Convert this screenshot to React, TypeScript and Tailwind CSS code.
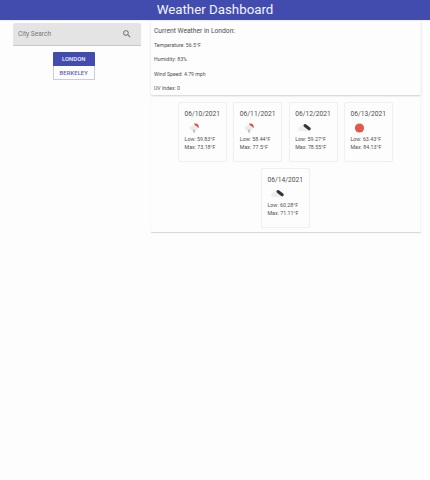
type Kind = 'rain' | 'cloud' | 'sun';

const days: { date: string; low: string; max: string; kind: Kind }[] = [
  { date: '06/10/2021', low: '59.83', max: '73.18', kind: 'rain' },
  { date: '06/11/2021', low: '58.44', max: '77.5', kind: 'rain' },
  { date: '06/12/2021', low: '59.27', max: '78.55', kind: 'cloud' },
  { date: '06/13/2021', low: '63.43', max: '84.13', kind: 'sun' },
  { date: '06/14/2021', low: '60.28', max: '71.11', kind: 'cloud' },
];

function WeatherIcon({ kind }: { kind: Kind }) {
  return (
    <svg viewBox="0 0 18 18" className="block h-[18px] w-[18px]">
      {kind === 'sun' && <circle cx="9.5" cy="9" r="4.6" fill="#e2594b" />}
      {kind === 'rain' && (
        <>
          <path d="M9 4.6Q13.8 3.8 13.9 8.8L11 8.4Z" fill="#dc4b43" />
          <path d="M6.5 11.2a2 2 0 0 1 .2-4 2.6 2.6 0 0 1 4.3-.2 2.2 2.2 0 0 1 .5 4.2Z" fill="#ececef" />
          <path d="M7.8 11l2.4.6M8 12.6l2.1.6" stroke="#b6b6bb" strokeWidth="1.1" />
        </>
      )}
      {kind === 'cloud' && (
        <>
          <path d="M5 12a2 2 0 0 1 0-4A3 3 0 0 1 9.5 6.7l4 5.3Z" fill="#eeeeef" />
          <path d="M10 6.5L14.2 9.8" stroke="#343438" strokeWidth="3" strokeLinecap="round" />
        </>
      )}
    </svg>
  );
}

export default function App() {
  return (
    <div className="flex h-[480px] w-[430px] flex-col overflow-hidden bg-[#fdfdfd] font-[Roboto,sans-serif] text-[#505050]">
      <header className="z-10 flex h-[19.5px] shrink-0 items-center justify-center bg-[#414cae] shadow-[0_0_1px_#aaaaae]">
        <h1 className="text-[13.3px] leading-[19px] text-[#f4f5ff]">Weather Dashboard</h1>
      </header>
      <div className="flex">
        <aside className="flex w-[151px] shrink-0 flex-col pt-[3.5px] pl-[13px]">
          <div className="flex h-[22.5px] w-[128px] items-center justify-between rounded-t-[2px] border-b border-[#c8c8c8] bg-[#e4e4e4] pr-[9.5px] pl-[5px]">
            <span className="text-[6.6px] leading-[10px] text-[#777]">City Search</span>
            <svg viewBox="0 0 24 24" className="h-[10px] w-[10px]" fill="#666">
              <path d="M15.5 14h-.79l-.28-.27A6.47 6.47 0 0 0 16 9.5 6.5 6.5 0 1 0 9.5 16c1.61 0 3.09-.59 4.23-1.57l.27.28v.79l5 4.99L20.49 19l-4.99-5zm-6 0C7.01 14 5 11.99 5 9.5S7.01 5 9.5 5 14 7.01 14 9.5 11.99 14 9.5 14z" />
            </svg>
          </div>
          <div className="mt-[6px] ml-[40px] flex w-[41.5px] flex-col text-center text-[5.8px] font-medium tracking-[0.1px]">
            <button className="h-[14.5px] rounded-t-[1px] bg-[#414cae] leading-[14px] text-[#f2f3ff]">LONDON</button>
            <button className="h-[14px] rounded-b-[1px] border border-t-0 border-[#c9cce5] leading-[14px] text-[#5a63b3]">BERKELEY</button>
          </div>
        </aside>
        <main className="w-[270px]">
          <section className="h-[75.5px] rounded-[1px] border-r border-[#f7f7f8] pt-[6px] pl-[3px] shadow-[0_1px_2px_#cfcfd6]">
            <h2 className="h-[14.5px] text-[6.7px] leading-[10px]">Current Weather in London:</h2>
            <div className="text-[5.2px]">
              <p className="h-[14.25px] leading-[11px]">Temperature: 56.5°F</p>
              <p className="h-[14.25px] leading-[11px]">Humidity: 83%</p>
              <p className="h-[14.25px] leading-[11px]">Wind Speed: 4.79 mph</p>
              <p className="leading-[11px]">UV Index: 0</p>
            </div>
          </section>
          <section className="flex h-[136.5px] flex-wrap content-start justify-center gap-x-[6.3px] gap-y-[6.5px] rounded-[1px] border-r border-[#f7f7f8] px-[19.5px] pt-[7px] shadow-[0_1px_1px_#d5d5d7]">
            {days.map((d) => (
              <article key={d.date} className="flex h-[59.5px] w-[49px] flex-col rounded-[2px] border border-[#f0f0f1] pt-[5.5px] pl-[5.5px] shadow-[0_0_1px_#f0f0f1]">
                <h3 className="text-[6.7px] leading-[10px] whitespace-nowrap">{d.date}</h3>
                <div className="h-[17.5px]">
                  <WeatherIcon kind={d.kind} />
                </div>
                <p className="text-[5.3px] leading-[7.7px] whitespace-nowrap">Low: {d.low}°F</p>
                <p className="text-[5.3px] leading-[7.7px] whitespace-nowrap">Max: {d.max}°F</p>
              </article>
            ))}
          </section>
        </main>
      </div>
    </div>
  );
}
